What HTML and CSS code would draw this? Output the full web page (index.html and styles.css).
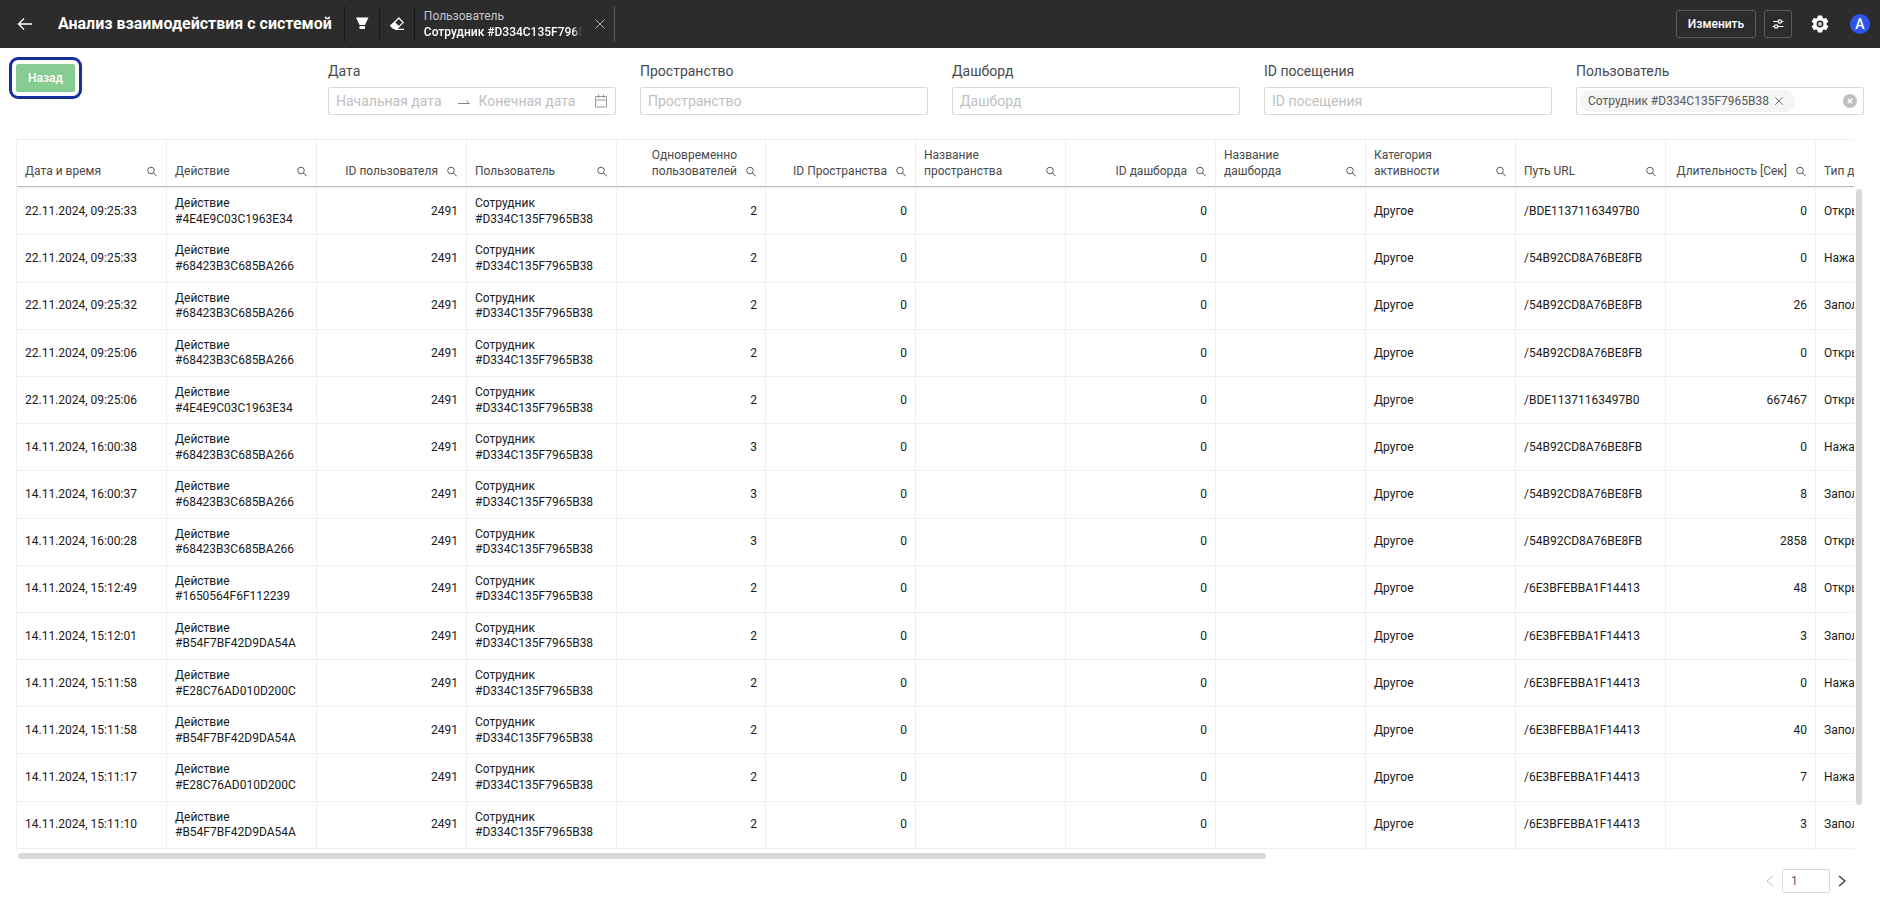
FILE: index.html
```html
<!DOCTYPE html>
<html lang="ru">
<head>
<meta charset="utf-8">
<title>Анализ взаимодействия с системой</title>
<link rel="stylesheet" href="styles.css">
</head>
<body>
<svg class="defs" aria-hidden="true">
  <symbol id="search" viewBox="0 0 12 12"><circle cx="5" cy="4.500" r="3.300" fill="none" stroke="currentColor" stroke-width=".9"/><path d="M7.400 6.900 10.800 10.300" stroke="currentColor"/></symbol>
  <symbol id="cross" viewBox="0 0 12 12"><path d="M1.500 1.500l9 9M10.500 1.500l-9 9" fill="none" stroke="currentColor"/></symbol>
</svg>
<header class="topbar">
  <button class="icon-btn back" aria-label="Вернуться"><svg width="16" height="16" viewBox="0 0 16 16"><path d="M15 8H2M7 2.500 1.500 8 7 13.500" fill="none" stroke="currentColor" stroke-width="1.300"/></svg></button>
  <h1 class="title">Анализ взаимодействия с системой</h1>
  <button class="icon-btn tool" aria-label="Фильтры"><svg width="16" height="16" viewBox="0 0 16 16" fill="currentColor"><path d="M2 1.500h12.500L11 9H5.500zM5.500 10h5.500v3H5.500z"/></svg></button>
  <button class="icon-btn tool" aria-label="Очистить"><svg width="16" height="16" viewBox="0 0 16 16"><path d="M9.800 2 14.200 6.400 8 12.600 3.600 8.200z" fill="none" stroke="currentColor" stroke-width="1.300" stroke-linejoin="round"/><path d="M5.600 5.700 10.500 10.600 8 13.100H4.200L1.300 10.200q-.5-.6 0-1.100zM7 12.700h8V14H5z" fill="currentColor"/></svg></button>
  <div class="chip">
    <div class="chip-text"><div class="chip-label">Пользователь</div><div class="chip-value">Сотрудник #D334C135F7965B38</div></div>
    <button class="icon-btn chip-close" aria-label="Сбросить"><svg width="12" height="12"><use href="#cross"/></svg></button>
  </div>
  <div class="actions">
    <button class="outline edit">Изменить</button>
    <button class="outline sliders" aria-label="Параметры"><svg width="14" height="14" viewBox="0 0 14 14" fill="none" stroke="currentColor" stroke-width="1.200"><path d="M2 4.500h5M10.500 4.500h2M1.500 9.500h2M7 9.500h5.500"/><circle cx="8.800" cy="4.500" r="1.700"/><circle cx="5.200" cy="9.500" r="1.700"/></svg></button>
    <button class="icon-btn gear" aria-label="Настройки"><svg width="18" height="18" viewBox="0 0 18 18"><path d="M7.300 1.200h3.400l.6 2.300 1.300.8 2.300-.7 1.700 2.900-1.700 1.700v1.600l1.700 1.700-1.700 2.900-2.300-.7-1.300.8-.6 2.300H7.300l-.6-2.300-1.300-.8-2.300.7-1.700-2.900 1.700-1.700V8.200L1.400 6.500l1.700-2.900 2.300.7 1.300-.8z" fill="currentColor" stroke="currentColor" stroke-width="1.200" stroke-linejoin="round"/><circle cx="9" cy="9" r="2.700" fill="#d0d0d0" stroke="#2c2c2c" stroke-width="1.500"/></svg></button>
    <button class="avatar" aria-label="Профиль">A</button>
  </div>
</header>
<main class="page">
  <section class="filters">
    <div class="cell-back"><button class="go-back">Назад</button></div>
    <div class="field"><label for="from">Дата</label>
      <div class="box range"><input id="from" placeholder="Начальная дата"><svg width="14" height="14" viewBox="0 0 14 14"><path d="M1 9.500h11.500L9 6.500" fill="none" stroke="#888"/></svg><input aria-label="Конечная дата" placeholder="Конечная дата"><svg width="14" height="14" viewBox="0 0 14 14"><path d="M1.500 2.500h11v10.500h-11zM1.500 6h11M4.500 .5v3.500M9.500 .5v3.500" fill="none" stroke="#999"/></svg></div></div>
    <div class="field"><label for="space">Пространство</label><div class="box"><input id="space" placeholder="Пространство"></div></div>
    <div class="field"><label for="dash">Дашборд</label><div class="box"><input id="dash" placeholder="Дашборд"></div></div>
    <div class="field"><label for="visit">ID посещения</label><div class="box"><input id="visit" placeholder="ID посещения"></div></div>
    <div class="field"><label for="user">Пользователь</label>
      <div class="box tags"><span class="tag">Сотрудник #D334C135F7965B38<button class="icon-btn" aria-label="Убрать"><svg width="10" height="10"><use href="#cross"/></svg></button></span><input id="user"><button class="icon-btn clear" aria-label="Очистить"><svg width="14" height="14" viewBox="0 0 14 14"><circle cx="7" cy="7" r="7" fill="#bfbfbf"/><path d="M4.800 4.800l4.400 4.400M9.200 4.800l-4.400 4.400" stroke="#fff" stroke-width="1.500"/></svg></button></div></div>
  </section>
  <section class="grid">
    <div class="viewport"><table class="log"><colgroup id="cols"></colgroup><thead><tr id="head"></tr></thead><tbody id="body"></tbody></table></div>
    <div class="vtrack"><div class="vthumb"></div></div>
    <div class="htrack"><div class="hthumb"></div></div>
  </section>
  <nav class="pager" aria-label="Страницы">
    <button class="icon-btn prev" aria-label="Назад" disabled><svg width="12" height="12" viewBox="0 0 12 12"><path d="M9 1 3 6l6 5" fill="none" stroke="currentColor"/></svg></button>
    <input class="page-no" aria-label="Страница" value="1">
    <button class="icon-btn next" aria-label="Вперёд"><svg width="12" height="12" viewBox="0 0 12 12"><path d="M3 1l6 5-6 5" fill="none" stroke="currentColor" stroke-width="1.300"/></svg></button>
  </nav>
</main>
<script src="app.js"></script>
</body>
</html>
```
FILE: styles.css
```css
* { box-sizing: border-box; }
body { margin: 0; font: 12px/16px Roboto, "Open Sans", sans-serif; color: #1a1a1a; background: #fff; }
button, input { font: inherit; color: inherit; }
button { cursor: pointer; }
.defs { display: none; }
svg { display: block; flex: none; }
.icon-btn { display: flex; align-items: center; justify-content: center; padding: 0; border: 0; background: none; }

.topbar { display: flex; align-items: center; height: 48px; padding-right: 10px; background: #2c2c2c; color: #fff; }
.back { width: 50px; height: 48px; }
.title { margin: 0; padding: 0 12px 0 8px; font-size: 16px; line-height: 24px; font-weight: 700; white-space: nowrap; }
.tool { width: 35px; height: 36px; border-left: 1px solid #1a1a1a; }
.chip { display: flex; align-items: center; width: 201px; height: 36px; padding-left: 9px; border-left: 1px solid #1a1a1a; border-right: 1px solid #595959; }
.chip-text { width: 158px; white-space: nowrap; overflow: hidden; }
.chip-label { color: #c8c8c8; }
.chip-value { font-weight: 500; -webkit-mask-image: linear-gradient(to right, #000 94%, transparent); mask-image: linear-gradient(to right, #000 94%, transparent); }
.chip-close { margin-left: 12px; color: #b0b0b0; }
.actions { display: flex; align-items: center; margin-left: auto; }
.outline { display: flex; align-items: center; justify-content: center; height: 28px; padding: 0; border: 1px solid #595959; border-radius: 2px; background: none; color: #fff; font-weight: 500; }
.edit { width: 80px; }
.sliders { width: 28px; margin-left: 8px; }
.gear { width: 18px; margin-left: 19px; }
.avatar { width: 20px; height: 20px; margin-left: 21px; padding: 0; border: 0; border-radius: 50%; background: #2f54eb; color: #fff; font-size: 14px; line-height: 20px; font-weight: 500; }

.page { padding: 14px 16px 0; }
.filters { display: grid; grid-template-columns: repeat(6, 1fr); gap: 24px; }
.go-back { height: 28px; width: 59px; margin-top: 2px; padding: 0; border: 0; border-radius: 2px; background: #87cc92; color: #fff; font-weight: 500; outline: 3px solid #16309b; outline-offset: 4px; }
.field { min-width: 0; }
.field label { display: block; margin-bottom: 7px; font-size: 14px; line-height: 18px; color: #4a4a4a; }
.box { display: flex; align-items: center; height: 28px; padding: 0 7px; border: 1px solid #d9d9d9; border-radius: 2px; font-size: 14px; }
.box input { flex: 1; min-width: 0; width: 100%; padding: 0; border: 0; outline: 0; background: none; }
.box input::placeholder { color: #bfbfbf; }
.range { gap: 8px; }
.range #from { flex-grow: 1; flex-basis: 5px; }
.tags { padding: 0 6px 0 3px; }
.tag { display: flex; align-items: center; gap: 5px; height: 22px; padding: 0 11px 0 8px; border-radius: 11px; background: #f5f5f5; color: #595959; font-size: 12px; white-space: nowrap; }

.grid { display: grid; grid-template-columns: minmax(0, 1fr) 10px; margin-top: 24px; }
.viewport { height: 712px; overflow: hidden; }
.log { width: 2399px; table-layout: fixed; border-collapse: separate; border-spacing: 0; border-left: 1px solid #f0f0f0; line-height: 1.3; }
.w150 { width: 150px; }
.w149 { width: 149px; }
.log th, .log td { padding: 8px 8px 7px; border-right: 1px solid #f0f0f0; border-bottom: 1px solid #f0f0f0; text-align: left; font-weight: 400; overflow: hidden; }
.log th { height: 48px; padding: 8px 8px 7px; border-top: 1px solid #f0f0f0; border-bottom-color: #b8b8b8; vertical-align: bottom; color: #4a4a4a; }
.log tbody tr:first-child td { border-top: 1px solid #f0f0f0; }
.log .num { text-align: right; }
.th-in { display: flex; align-items: flex-end; justify-content: space-between; gap: 8px; }
.num .th-in { justify-content: flex-end; }
.th-in svg { margin-bottom: 1px; }
.vtrack { padding: 50px 2px 0; }
.vthumb { height: 616px; border-radius: 3px; background: #d9d9d9; }
.htrack { padding: 2px 0 0 2px; }
.hthumb { width: 68%; height: 6px; border-radius: 3px; background: #d9d9d9; }

.pager { display: flex; align-items: center; justify-content: flex-end; margin-top: 10px; padding-right: 16px; }
.page-no { width: 48px; height: 24px; margin: 0 6px; padding: 0 8px; border: 1px solid #d9d9d9; border-radius: 2px; color: #595959; outline: 0; }
.prev { color: #bfbfbf; }
.next { color: #333; }
```
FILE: app.js
```js
const columns = [
  ['Дата и время'], ['Действие'], ['ID пользователя', 1], ['Пользователь'],
  ['Одновременно пользователей', 1], ['ID Пространства', 1], ['Название пространства'],
  ['ID дашборда', 1], ['Название дашборда'], ['Категория активности'], ['Путь URL'],
  ['Длительность [Сек]', 1], ['Тип действия'], [''], [''], ['']
];
const A = '#4E4E9C03C1963E34', B = '#68423B3C685BA266', C = '#1650564F6F112239', D = '#B54F7BF42D9DA54A', E = '#E28C76AD010D200C';
const U = '/BDE11371163497B0', V = '/54B92CD8A76BE8FB', W = '/6E3BFEBBA1F14413';
const O = 'Открытие', N = 'Нажатие', Z = 'Заполнение';
const rows = [
  ['22.11.2024, 09:25:33', A, 2, U, 0, O],
  ['22.11.2024, 09:25:33', B, 2, V, 0, N],
  ['22.11.2024, 09:25:32', B, 2, V, 26, Z],
  ['22.11.2024, 09:25:06', B, 2, V, 0, O],
  ['22.11.2024, 09:25:06', A, 2, U, 667467, O],
  ['14.11.2024, 16:00:38', B, 3, V, 0, N],
  ['14.11.2024, 16:00:37', B, 3, V, 8, Z],
  ['14.11.2024, 16:00:28', B, 3, V, 2858, O],
  ['14.11.2024, 15:12:49', C, 2, W, 48, O],
  ['14.11.2024, 15:12:01', D, 2, W, 3, Z],
  ['14.11.2024, 15:11:58', E, 2, W, 0, N],
  ['14.11.2024, 15:11:58', D, 2, W, 40, Z],
  ['14.11.2024, 15:11:17', E, 2, W, 7, N],
  ['14.11.2024, 15:11:10', D, 2, W, 3, Z],
  null
];
const cls = c => c[1] ? ' class="num"' : '';
document.getElementById('cols').innerHTML = columns.map((c, i) => `<col class="${i === 4 ? 'w149' : 'w150'}">`).join('');
document.getElementById('head').innerHTML = columns.map(c =>
  `<th${cls(c)}><div class="th-in"><span>${c[0]}</span><svg width="12" height="12"><use href="#search"/></svg></div></th>`).join('');
document.getElementById('body').innerHTML = rows.map(row => {
  if (!row) return '<tr>' + columns.map(() => '<td></td>').join('') + '</tr>';
  const [t, a, n, url, sec, type] = row;
  const cells = [t, 'Действие<br>' + a, 2491, 'Сотрудник<br>#D334C135F7965B38', n, 0, '', 0, '', 'Другое', url, sec, type, '', '', ''];
  return '<tr>' + cells.map((v, i) => `<td${cls(columns[i])}>${v}</td>`).join('') + '</tr>';
}).join('');
```
